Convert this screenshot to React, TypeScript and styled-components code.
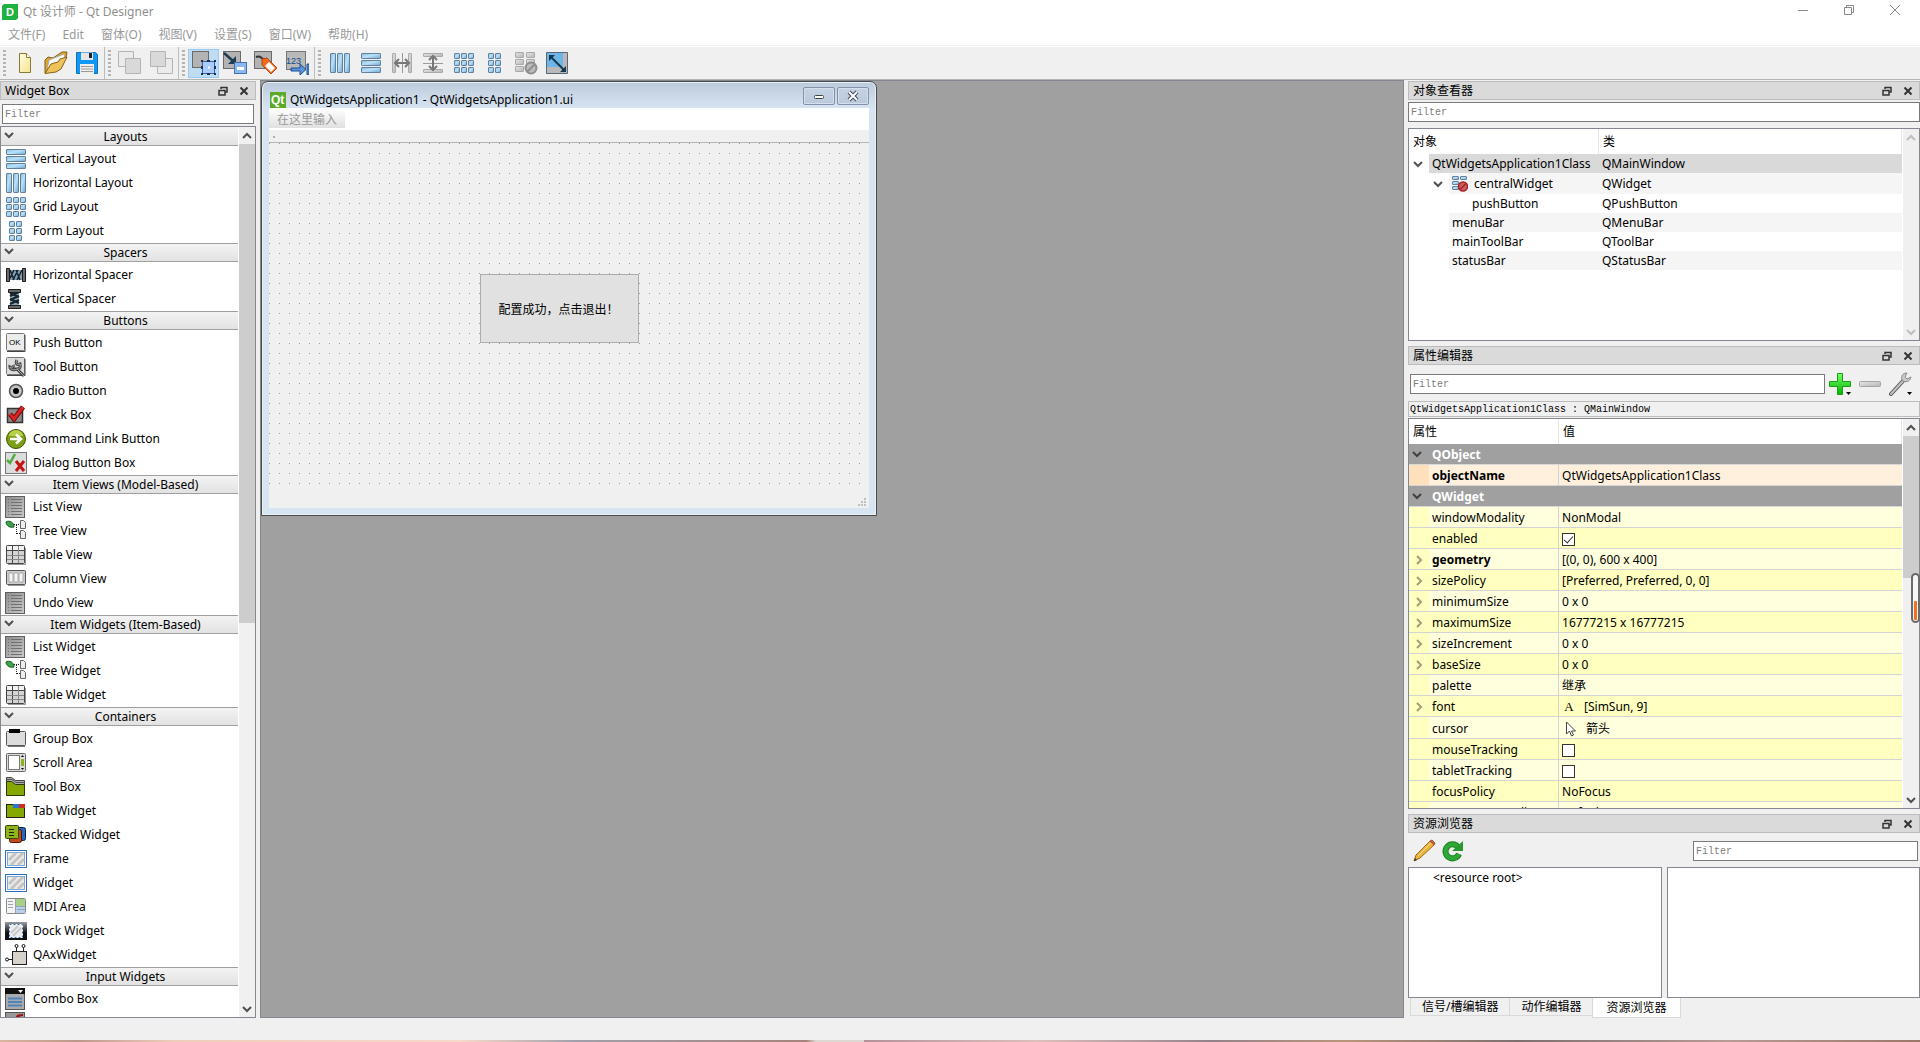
import React from "react";
import styled, { createGlobalStyle, css } from "styled-components";

const UI = `"Noto Sans", "Noto Sans CJK SC", sans-serif`;
const MONO = `"Liberation Mono", "Noto Sans CJK SC", monospace`;

const Global = createGlobalStyle`
  *, *::before, *::after { box-sizing: border-box; }
  body { margin: 0; font: 12px/16px ${UI}; color: #000; background: #f0f0f0; }
  button, input { font: inherit; color: inherit; margin: 0; }
  button { padding: 0; border: 0; background: none; }
  svg { display: block; flex: none; }
`;

/* ---------- frame of the application ---------- */

const Shell = styled.div`
  height: 100vh;
  min-height: 720px;
  display: flex;
  flex-direction: column;
  overflow: hidden;
`;

const TitleBar = styled.header`
  display: flex;
  align-items: center;
  height: 24px;
  padding: 0 2px;
  background: #fff;
  color: #8f8f8f;
`;

const Caption = styled.span`
  flex: 1;
  padding-left: 5px;
`;

const CaptionButton = styled.button`
  display: grid;
  place-items: center;
  width: 46px;
  height: 20px;
  margin-bottom: 4px;
`;

const MenuBar = styled.nav`
  display: flex;
  gap: 1px;
  height: 22px;
  background: #fff;
  border-bottom: 1px solid #f0f0f0;
  color: #999;
`;

const MenuItem = styled.button`
  padding: 0 8px;
`;

const ToolBar = styled.div`
  display: flex;
  height: 34px;
  background: #f0f0f0;
  border-top: 1px solid #fff;
  border-bottom: 1px solid #b4b4b4;
`;

const ToolGroup = styled.div`
  display: flex;
  align-items: center;
  padding-right: 2px;
  & + & { border-left: 1px solid #bdbdbd; }
`;

const Grip = styled.span`
  width: 3px;
  height: 27px;
  margin: 0 3px;
  background: repeating-linear-gradient(#b4b4b4 0 2px, transparent 2px 4px);
`;

const ToolButton = styled.button<{ $on?: boolean }>`
  display: grid;
  place-items: center;
  width: 31px;
  height: 29px;
  ${(p) => p.$on && css`background: #c0dcf3; border: 1px solid #98ccf5;`}
`;

const Main = styled.main`
  flex: 1;
  min-height: 0;
  display: grid;
  grid-template-columns: 256px minmax(0, 1fr) 512px;
  column-gap: 4px;
`;

const StatusBar = styled.footer`
  height: 22px;
`;

const DesktopEdge = styled.div`
  height: 2px;
  background: linear-gradient(90deg, #d9b5a0, #bb9788 4%, #efcdbb 9%, #f7d9c8 24%, #a0a0ab 30%, #a5847c 42%,
    #ded8d2 42.5%, #ded8d2 45%, #b3939a 45%, #dcbfbb 54%, #93828a 63%, #b9957a 70%, #7c706f 79%, #b79b95 90%, #9b7767);
`;

/* ---------- docks ---------- */

const Dock = styled.section<{ $grow?: number }>`
  display: flex;
  flex-direction: column;
  min-height: 0;
  ${(p) => p.$grow && css`flex: ${p.$grow} 1 0;`}
`;

const DockColumn = styled.aside`
  display: flex;
  flex-direction: column;
  gap: 5px;
  min-height: 0;
  padding-top: 1px;
`;

const DockTitle = styled.h2`
  display: flex;
  align-items: center;
  gap: 5px;
  flex: none;
  height: 19px;
  margin: 0;
  padding: 0 3px 0 4px;
  font-size: 12px;
  font-weight: 400;
  line-height: 16px;
  background: #dadada;
  border: 1px solid #bcbcbc;
  & > span { flex: 1; padding-top: 1px; }
  & > button { display: grid; place-items: center; width: 16px; height: 16px; }
`;

const Filter = styled.input`
  min-width: 0;
  height: 20px;
  flex: none;
  padding: 1px 2px 0;
  border: 1px solid #7a7a7a;
  background: #fff;
  font: 10px/16px ${MONO};
  &::placeholder { color: #7d7d7d; opacity: 1; }
`;

const SideFilter = styled(Filter)<{ $wide?: boolean }>`
  margin: ${(p) => (p.$wide ? "2px 0 6px" : "4px 2px 2px")};
`;

const Frame = styled.div`
  display: flex;
  flex: 1;
  min-height: 0;
  background: #fff;
  border: 1px solid #828790;
`;

const Viewport = styled.div`
  flex: 1;
  min-width: 0;
  overflow: hidden;
`;

const Track = styled.div`
  display: flex;
  flex-direction: column;
  width: 16px;
  margin-left: 1px;
  background: #f0f0f0;
  color: #505050;
`;

const TrackButton = styled.button`
  display: grid;
  place-items: center;
  height: 17px;
  &:disabled { color: #bfbfbf; }
`;

const TrackArea = styled.div`
  flex: 1;
`;

const Thumb = styled.div`
  background: #cdcdcd;
`;

/* ---------- widget box ---------- */

const SectionHead = styled.button`
  display: grid;
  grid-template-columns: 24px 1fr 12px;
  align-items: center;
  width: 100%;
  height: 19px;
  margin-bottom: 1px;
  background: linear-gradient(#f3f3f3, #e2e2e2);
  border-top: 1px solid #a0a0a0;
  border-bottom: 1px solid #a0a0a0;
  & > svg { margin: 0 0 3px 3px; color: #505050; }
`;

const Section = styled.section`
  &:first-child ${SectionHead} { border-top-color: #f3f3f3; }
`;

const ItemList = styled.ul`
  list-style: none;
  margin: 0;
  padding: 0;
`;

const Item = styled.li`
  display: flex;
  align-items: center;
  gap: 6px;
  height: 24px;
  padding-left: 4px;
`;

/* ---------- workspace ---------- */

const Workspace = styled.div`
  position: relative;
  background: #a0a0a0;
  border: 1px solid #828790;
  overflow: hidden;
`;

const FormWindow = styled.article`
  position: absolute;
  left: 0;
  top: 0;
  padding: 0 7px 7px;
  background: #d7e4f2;
  background-image: linear-gradient(#bccbdb, #d7e4f2 26px);
  border: 1px solid #4a4a4a;
  border-radius: 7px 7px 0 0;
  box-shadow: inset 0 0 0 1px #e8f0f8;
`;

const FormTitle = styled.header`
  display: flex;
  align-items: center;
  gap: 2px;
  height: 26px;
  & > span { flex: 1; padding: 9px 0 0 2px; }
  & > svg { margin: 9px 0 0 1px; }
`;

const FormButton = styled.button`
  display: grid;
  place-items: center;
  width: 32px;
  height: 18px;
  margin-top: 1px;
  border: 1px solid #8491ab;
  border-radius: 2px;
  background: linear-gradient(#c5d3e3, #b9c9dc);
  box-shadow: inset 0 0 0 1px #d5e0ec;
`;

const FormBody = styled.div`
  width: 600px;
  background: #f0f0f0;
`;

const FormMenu = styled.div`
  height: 24px;
  background: #fff;
  border-bottom: 2px solid #f0f0f0;
`;

const TypeHere = styled.button`
  width: 76px;
  height: 20px;
  padding-top: 3px;
  color: #999;
  background: linear-gradient(#fff, #e0e0e0);
`;

const FormToolBar = styled.div`
  display: flex;
  align-items: center;
  height: 11px;
  padding-left: 4px;
  border-bottom: 1px solid #b4b4b4;
  &::before { content: ""; width: 2px; height: 2px; background: #b0b0b0; }
`;

const Canvas = styled.div`
  position: relative;
  height: 345px;
  background-image: linear-gradient(90deg, transparent 1px, #f0f0f0 1px), linear-gradient(#9a9a9a 1px, #f0f0f0 1px);
  background-size: 10px 10px;
`;

const PlacedButton = styled.button`
  position: absolute;
  left: 211px;
  top: 131px;
  width: 159px;
  height: 69px;
  padding: 2px 2px 0 0;
  background: #e1e1e1;
  border: 1px solid #adadad;
`;

const FormStatus = styled.div`
  display: flex;
  justify-content: flex-end;
  align-items: flex-end;
  height: 20px;
  padding: 2px 3px;
`;

/* ---------- object inspector ---------- */

const ObjectTable = styled.table`
  width: 100%;
  table-layout: fixed;
  border-collapse: separate;
  border-spacing: 0;
  th {
    height: 25px;
    padding: 0 4px;
    font-weight: 400;
    text-align: left;
    border-right: 1px solid #e5e5e5;
  }
  th:first-child { width: 190px; }
  td { padding: 0; white-space: nowrap; }
`;

const ObjectRow = styled.tr<{ $bg: string; $tall?: boolean }>`
  height: ${(p) => (p.$tall ? 21 : 19)}px;
  td:last-child { background: ${(p) => p.$bg}; padding-left: 3px; }
`;

const ObjectCell = styled.div<{ $depth: number; $bg: string; $tall?: boolean }>`
  display: flex;
  align-items: center;
  height: ${(p) => (p.$tall ? 21 : 19)}px;
  background: linear-gradient(90deg, #fff ${(p) => p.$depth * 20}px, ${(p) => p.$bg} 0);
`;

const Branch = styled.span<{ $depth: number }>`
  display: flex;
  justify-content: flex-end;
  width: ${(p) => p.$depth * 20}px;
  padding-right: 6px;
  margin-right: 3px;
  color: #505050;
`;

const ObjectName = styled.span<{ $icon?: boolean }>`
  padding-left: ${(p) => (p.$icon ? 6 : 0)}px;
`;

/* ---------- property editor ---------- */

const PropBar = styled.div`
  display: flex;
  align-items: center;
  margin: 9px 5px 7px 2px;
  height: 20px;
  flex: none;
  ${Filter} { flex: 1; }
`;

const PropButton = styled.button`
  display: grid;
  place-items: center;
  width: 30px;
  height: 28px;
`;

const ClassLabel = styled.div`
  flex: none;
  height: 16px;
  margin-bottom: 1px;
  padding: 1px 1px 0;
  border: 1px solid #bcbcbc;
  font: 10px/14px ${MONO};
`;

const PropTable = styled.table`
  width: 100%;
  table-layout: fixed;
  border-collapse: separate;
  border-spacing: 0;
  text-align: left;
  th { font-weight: 400; padding: 0 4px; }
  td, tbody th { height: 21px; padding: 2px 0 0; white-space: nowrap; }
  thead th { height: 25px; border-right: 1px solid #e5e5e5; }
`;

const GroupRow = styled.tr`
  th, td { background: #a0a0a0; color: #fff; border-bottom: 1px solid #d8d8d8; }
  tbody & th { font-weight: 700; padding-left: 3px; }
  tbody & td { padding-top: 0; }
  td > svg { margin-left: 3px; color: #404040; }
`;

const PropRow = styled.tr<{ $bg: string; $edge: string; $bold?: boolean; $tall?: boolean }>`
  height: ${(p) => (p.$tall ? 22 : 21)}px;
  td, th { background: ${(p) => p.$bg}; border-bottom: 1px solid #d4d4d4; }
  td:first-child { background: ${(p) => p.$edge}; color: #a09f78; }
  td > svg { margin-left: 5px; }
  tbody & th {
    padding-left: 3px;
    border-right: 1px solid #d4d4d4;
    font-weight: ${(p) => (p.$bold ? 700 : 400)};
  }
`;

const Value = styled.div`
  display: flex;
  align-items: center;
  gap: 8px;
  padding-left: 3px;
`;

const FontGlyph = styled.span`
  width: 14px;
  text-align: center;
  font: 13px/16px "Liberation Serif", serif;
`;

const Check = styled.input`
  appearance: none;
  width: 13px;
  height: 13px;
  display: grid;
  place-items: center;
  border: 1px solid #333;
  background: #fff;
  &:checked::after {
    content: "";
    width: 5px;
    height: 9px;
    margin-bottom: 3px;
    border: solid #333;
    border-width: 0 1px 1px 0;
    transform: rotate(42deg);
  }
`;

const Meter = styled.div`
  position: absolute;
  right: 0;
  top: 573px;
  width: 9px;
  height: 50px;
  padding: 26px 1px 0;
  border: 2px solid #6b6b6b;
  border-radius: 5px;
  background: #f6f6f6;
  &::after { content: ""; display: block; height: 19px; background: #f37021; border-radius: 1px; }
`;

/* ---------- resource browser ---------- */

const ResourceBar = styled.div`
  display: flex;
  align-items: center;
  gap: 5px;
  flex: none;
  height: 34px;
  padding: 2px 2px 0 4px;
  ${Filter} { width: 225px; margin-left: auto; }
`;

const ResourcePanes = styled.div`
  display: grid;
  grid-template-columns: 254px 1fr;
  gap: 5px;
  flex: 1;
  min-height: 0;
`;

const Root = styled.span`
  padding: 2px 0 0 24px;
`;

const Tabs = styled.div`
  display: flex;
  align-items: flex-start;
  flex: none;
  height: 20px;
  padding-left: 2px;
`;

const Tab = styled.button<{ $active?: boolean }>`
  height: ${(p) => (p.$active ? 20 : 18)}px;
  padding: 1px ${(p) => (p.$active ? 13 : 11)}px 0;
  border: 1px solid #d9d9d9;
  border-top: 0;
  background: ${(p) => (p.$active ? "#fff" : "#f0f0f0")};
  & + & { margin-left: -1px; }
`;

/* ---------- drawings ---------- */

const Svg = ({ s = 22, children }: { s?: number; children: React.ReactNode }) => (
  <svg width={s} height={s} viewBox={`0 0 ${s} ${s}`} fill="none" aria-hidden="true">{children}</svg>
);

const Chevron = ({ dir = "down" }: { dir?: "down" | "up" | "right" }) => {
  const d = { down: "M1 3 5 7 9 3", up: "M1 7 5 3 9 7", right: "M3 1 7 5 3 9" }[dir];
  return <Svg s={10}><path d={d} stroke="currentColor" strokeWidth="2" /></Svg>;
};

const Defs = () => (
  <defs>
    <linearGradient id="blue" x1="0" y1="0" x2="1" y2="1">
      <stop stopColor="#86bbdf" /><stop offset=".45" stopColor="#b9e2f8" /><stop offset="1" stopColor="#6ea6d2" />
    </linearGradient>
    <linearGradient id="grey" x1="0" y1="0" x2="1" y2="1">
      <stop stopColor="#e6e6e6" /><stop offset="1" stopColor="#b5b5b5" />
    </linearGradient>
    <linearGradient id="steel" x1="0" y1="0" x2="1" y2="1">
      <stop stopColor="#8c8c8c" /><stop offset="1" stopColor="#cbcbcb" />
    </linearGradient>
    <linearGradient id="gold" x1="0" y1="0" x2="1" y2="1">
      <stop stopColor="#fffce0" /><stop offset="1" stopColor="#f6e48c" />
    </linearGradient>
    <linearGradient id="green" x1="0" y1="0" x2="0" y2="1">
      <stop stopColor="#7bff6b" /><stop offset="1" stopColor="#00b400" />
    </linearGradient>
    <linearGradient id="dark" x1="0" y1="0" x2="0" y2="1">
      <stop stopColor="#9a9a9a" /><stop offset=".6" stopColor="#111" />
    </linearGradient>
  </defs>
);

type Cell = [number, number, number, number];
const Cells = ({ cells, dim }: { cells: Cell[]; dim?: boolean }) => (
  <>
    {cells.map(([x, y, w, h]) => (
      <rect key={`${x}-${y}`} x={x + 0.5} y={y + 0.5} width={w - 1} height={h - 1} rx=".5"
        fill={dim ? "url(#grey)" : "url(#blue)"} stroke={dim ? "#a9a9a9" : "#64809f"} />
    ))}
  </>
);

const rowsOf: Cell[] = [[1, 1, 20, 6], [1, 8, 20, 6], [1, 15, 20, 6]];
const colsOf: Cell[] = [[1, 1, 6, 20], [8, 1, 6, 20], [15, 1, 6, 20]];
const grid = (xs: number[]): Cell[] => xs.flatMap((x) => [1, 8, 15].map((y): Cell => [x, y, 6, 6]));

const Sheet = ({ w = 15 }: { w?: number }) => (
  <rect x=".5" y=".5" width={w} height={w} fill="#b3b3b3" stroke="#6a6a6a" />
);

const ListDrawing = () => (
  <Svg>
    <rect x=".5" y=".5" width="19" height="21" fill="url(#steel)" stroke="#5f5f5f" />
    {[3, 6, 9, 12, 15, 18].map((y) => <path key={y} d={`M3 ${y}.5h1M6 ${y}.5h11`} stroke="#707070" />)}
  </Svg>
);
const TreeDrawing = () => (
  <Svg>
    <path d="M1 2c3-2 8 0 8 5-4 1-8-1-8-5Z" fill="#3fa34c" stroke="#155a21" />
    <path d="M9 4.500h6M11.500 5v9M12 13.500h3" stroke="#222" strokeDasharray="1 1" />
    <path d="M15.500 .5h3l2 2v6h-5ZM15.500 10.500h3l2 2v6h-5Z" fill="#eee" stroke="#666" />
  </Svg>
);
const TableDrawing = () => (
  <Svg>
    <rect x="1.500" y="1.500" width="18" height="18" rx="1" fill="#d4d4d4" stroke="#444" />
    <path d="M2 2h17v4H2Z" fill="#f2f2f2" />
    <path d="M2 6.500h17M7.500 2v17" stroke="#444" /><path d="M2 11.500h17M2 15.500h17M13.500 2v17" stroke="#888" />
    <path d="M3 20.500h17.500V4" stroke="#999" />
  </Svg>
);
const HatchDrawing = () => (
  <Svg>
    <rect x=".5" y="2.500" width="21" height="17" fill="#fff" stroke="#2f6fc4" />
    <rect x="2.500" y="4.500" width="17" height="13" fill="#ececea" stroke="#7da5dc" />
    <path d="M4 12 11 5M6 17 18 5M13 17l6-6" stroke="#c4c4c4" strokeWidth="3" />
  </Svg>
);

const drawings: Record<string, React.ReactNode> = {
  rows: <Svg><Cells cells={rowsOf} /></Svg>,
  cols: <Svg><Cells cells={colsOf} /></Svg>,
  grid: <Svg><Cells cells={grid([1, 8, 15])} /></Svg>,
  form: <Svg><Cells cells={grid([4, 11])} /></Svg>,
  hspacer: (
    <Svg>
      <path d="M3 6h16v10H3Z" fill="#7f9fb3" />
      <path d="m4 16 5-10M8 16l5-10M12 16l5-10M5 6l4 10M11 6l4 10" stroke="#16242c" strokeWidth="1.500" />
      <path d="M1.500 4.500h3v13h-3ZM17.500 4.500h3v13h-3Z" fill="#6a6a6a" stroke="#1c1c1c" />
    </Svg>
  ),
  vspacer: (
    <Svg>
      <path d="M5 3h9v16H5Z" fill="#86a9bd" />
      <path d="m5 8 9-4M5 12l9-4M5 16l9-4M5 5l9 4M5 11l9 4" stroke="#16242c" strokeWidth="2" />
      <path d="M3.500 1.500h12v3h-12ZM3.500 17.500h12v3h-12Z" fill="#6a6a6a" stroke="#1c1c1c" />
    </Svg>
  ),
  push: (
    <Svg>
      <rect x="1.500" y="1.500" width="18" height="17" rx="1" fill="#ececec" stroke="#777" />
      <path d="M2 19.500h18V3" stroke="#444" />
      <text x="4" y="13" fontSize="8" fontFamily="Liberation Sans, sans-serif" fill="#000">OK</text>
    </Svg>
  ),
  tool: (
    <Svg>
      <rect x="1.500" y="1.500" width="18" height="17" rx="1" fill="#dcdcdc" stroke="#777" />
      <path d="M2 19.500h18V3" stroke="#444" />
      <path d="M12 4c-2 4 0 5 3 4 1 4-1 5-3 5l7 7M12 13c-3 2-7 0-7-2 2 1 4 0 3-2" stroke="#444" strokeWidth="3" />
      <path d="M12 4c-2 4 0 5 3 4 1 4-1 5-3 5l7 7M12 13c-3 2-7 0-7-2 2 1 4 0 3-2" stroke="#aaa" />
    </Svg>
  ),
  radio: (
    <Svg>
      <circle cx="11" cy="11" r="6.500" fill="#c4c4c4" stroke="#555" strokeWidth="1.500" />
      <circle cx="11" cy="11" r="3" fill="#000" />
    </Svg>
  ),
  check: (
    <Svg>
      <rect x="2.500" y="4.500" width="15" height="14" fill="#8b8b8b" stroke="#333" strokeWidth="1.500" />
      <path d="m5 10 4 5L18 3" stroke="#6e0a0a" strokeWidth="5" /><path d="m5 10 4 5L18 3" stroke="#d92222" strokeWidth="3" />
    </Svg>
  ),
  command: (
    <Svg>
      <circle cx="11" cy="11" r="9.500" fill="#7d9f15" stroke="#3f5207" />
      <path d="M4 8a7 6 0 0 1 14 0Z" fill="#b6d04c" />
      <path d="M5 11h10M11 6.500l5 4.500-5 4.500" stroke="#fff" strokeWidth="2.500" />
    </Svg>
  ),
  dialog: (
    <Svg>
      <rect x=".5" y=".5" width="21" height="21" fill="#dcdcdc" stroke="#777" />
      <path d="m2 8 3 3 5-9" stroke="#4dae3b" strokeWidth="2.500" />
      <path d="m11 9 8 10M19 9l-8 10" stroke="#c41414" strokeWidth="3" />
    </Svg>
  ),
  list: <ListDrawing />,
  tree: <TreeDrawing />,
  table: <TableDrawing />,
  column: (
    <Svg>
      <rect x="1.500" y="2.500" width="19" height="14" rx="1" fill="#ccc" stroke="#555" />
      <path d="M4 5h4v9H4ZM9 5h4v9H9ZM14 5h4v9h-4Z" fill="#f4f4f4" stroke="#aaa" />
      <path d="M3 17.500h17" stroke="#999" />
    </Svg>
  ),
  group: (
    <Svg>
      <rect x="1.500" y="3.500" width="19" height="14" rx="1" fill="#dcdcdc" stroke="#555" />
      <path d="M3 18.500h17" stroke="#777" /><path d="M4 1h11v4H4Z" fill="#000" />
    </Svg>
  ),
  scroll: (
    <Svg>
      <rect x="1.500" y="1.500" width="19" height="18" rx="1" fill="#ddd" stroke="#666" />
      <rect x="3.500" y="3.500" width="11" height="14" fill="#fff" stroke="#777" />
      <path d="M16 7h3v7h-3Z" fill="#8ab51a" /><path d="m16 5 1.500-2L19 5ZM16 16l1.500 2 1.500-2Z" fill="#000" />
    </Svg>
  ),
  toolbox: (
    <Svg>
      <path d="M1.500 1.500h5l4 3h9v15h-18Z" fill="#aaa" stroke="#444" />
      <path d="M1.500 5.500h5l4 3h9v11h-18Z" fill="#84a800" stroke="#2c3a00" />
      <path d="M2 3.500h5l4 3h8" stroke="#555" />
    </Svg>
  ),
  tab: (
    <Svg>
      <rect x="1.500" y="4.500" width="18" height="13" fill="#84a800" stroke="#222" />
      <path d="M8 4h6v4H8Z" fill="#2377d3" /><path d="M14 4h6v4h-6Z" fill="#d32b23" />
    </Svg>
  ),
  stacked: (
    <Svg>
      <rect x="8.500" y="3.500" width="12" height="13" rx="2" fill="#2566c4" stroke="#123" />
      <rect x="4.500" y="5.500" width="12" height="13" rx="2" fill="#c4491a" stroke="#4d1900" />
      <rect x=".5" y="1.500" width="13" height="13" rx="1" fill="#8fb31a" stroke="#39480a" />
      <path d="M4 5.500h5M4 8.500h5M4 11.500h5" stroke="#1d2600" />
    </Svg>
  ),
  hatch: <HatchDrawing />,
  mdi: (
    <Svg>
      <rect x="1.500" y="2.500" width="19" height="15" rx="1" fill="#f3f3f3" stroke="#888" />
      <path d="M11 3h9v7h-9Z" fill="#a5d086" /><path d="M11 10h9v7h-9Z" fill="#b6d2f3" />
      <path d="M3 5.500h5M3 8.500h5M3 11.500h5M12 13.500h8M11 10.500h9M10.500 3v14" stroke="#9aa3ad" />
    </Svg>
  ),
  dockw: (
    <Svg>
      <path d="M0 2h22v18H0Z" fill="url(#dark)" />
      <rect x="4.500" y="4.500" width="13" height="13" fill="#ececec" stroke="#fff" />
      <path d="m6 13 7-7M8 16l8-8" stroke="#c9c9c9" strokeWidth="2" />
      <rect x="4.500" y="4.500" width="13" height="13" stroke="#2f6fc4" strokeDasharray="2 2" />
    </Svg>
  ),
  qax: (
    <Svg>
      <rect x="7.500" y="7.500" width="14" height="13" fill="#d6d2cc" stroke="#222" />
      <path d="M11.500 7V3M18.500 7V3M7 15.500H3" stroke="#222" />
      <circle cx="11.500" cy="2" r="1.500" fill="#fff" stroke="#111" /><circle cx="18.500" cy="2" r="1.500" fill="#fff" stroke="#111" />
      <circle cx="2" cy="15.500" r="1.500" fill="#fff" stroke="#111" />
    </Svg>
  ),
  combo: (
    <Svg>
      <rect x=".5" y=".5" width="19" height="21" fill="#aaa" stroke="#555" />
      <path d="M0 0h20v6H0Z" fill="#111" /><path d="M13 2h5l-2.500 3Z" fill="#fff" />
      <path d="M3 10.500h14M3 14h14M3 17.500h14" stroke="#4f83bd" strokeWidth="2" />
    </Svg>
  ),
  fontcombo: (
    <Svg>
      <rect x=".5" y=".5" width="19" height="21" fill="#999" stroke="#555" />
      <path d="M11 7c1-4 3-4 7-4M14 3v6" stroke="#a01414" strokeWidth="2" />
    </Svg>
  ),
};

const toolGroups: { name: string; on?: boolean; art: React.ReactNode }[][] = [
  [
    { name: "New", art: <Svg s={24}><path d="M6.500 2.500h7l4 4v15h-11Z" fill="url(#gold)" stroke="#8a7a3a" /><path d="M13.500 2.500v4h4" fill="#fff" stroke="#8a7a3a" /></Svg> },
    { name: "Open", art: (
      <Svg s={24}>
        <path d="M1 22V9l3-3 5 1 9-6h5l-1 6Z" fill="#dca52c" stroke="#85611a" />
        <path d="m3 19 2-10 15-6 1 5-8 11Z" fill="#f7f7f2" stroke="#aaa" />
        <path d="M1 22.500 7 13l7-2 2-3 7-2-6 12-5 3Z" fill="#f0c35a" stroke="#85611a" />
      </Svg>
    ) },
    { name: "Save", art: (
      <Svg s={24}>
        <path d="M1.500 1.500h19l2 2v19h-21Z" fill="#1198f5" stroke="#0873c2" />
        <path d="M6 1.500h12V9H6Z" fill="#e5e5e5" /><path d="M14 2h3v5h-3Z" fill="#222" />
        <path d="M5 13h14v10H5Z" fill="#eee" /><path d="M6 15.500h12M6 18h12M6 20.500h12" stroke="#9a9a9a" />
      </Svg>
    ) },
  ],
  [
    { name: "Send to back", art: <Svg s={24}><g stroke="#b4b4b4"><path d="M.5.500h15v15H.5Z" fill="#ebebeb" /><path d="M7.500 7.500h15v15h-15Z" fill="#d9d9d9" /></g></Svg> },
    { name: "Bring to front", art: <Svg s={24}><g stroke="#b4b4b4"><path d="M8.500 7.500h15v15h-15Z" fill="#ebebeb" /><path d="M1.500.500h15v15h-15Z" fill="#d9d9d9" /></g></Svg> },
  ],
  [
    { name: "Edit widgets", on: true, art: (
      <Svg s={24}>
        <Sheet w={16} />
        <rect x="10.500" y="10.500" width="12" height="12" fill="#a9ccff" stroke="#3b64a8" />
        <path d="M9 9h2v2H9ZM15 9h3v2h-3ZM22 9h2v2h-2ZM9 15h2v3H9ZM22 15h2v3h-2ZM9 22h2v2H9ZM15 22h3v2h-3ZM22 22h2v2h-2Z" fill="#1d2f4f" />
        <path d="M16 15.500h2v2h-2Z" fill="#fff" />
      </Svg>
    ) },
    { name: "Edit signals/slots", art: (
      <Svg s={24}>
        <Sheet w={17} />
        <path d="m1 2 9 8" stroke="#1f3d52" strokeWidth="2.500" /><path d="M13 13V5l-8 8Z" fill="#1f3d52" />
        <rect x="11.500" y="11.500" width="12" height="11" fill="#8bb8ef" stroke="#4470ad" /><path d="M14 16h7v3h-7Z" fill="#fff" />
      </Svg>
    ) },
    { name: "Edit buddies", art: (
      <Svg s={24}>
        <Sheet w={17} />
        <path d="M2 6c5-2 5 2 8 2" stroke="#333" strokeWidth="2" />
        <path d="m8 8 5-1 10 10-6 6L8 14Z" fill="#ee6a1f" stroke="#b4470c" /><path d="m15 11 6 6-4 4-6-6Z" fill="#fff" />
      </Svg>
    ) },
    { name: "Edit tab order", art: (
      <Svg s={24}>
        <rect x="1.500" y=".5" width="19" height="18" fill="#b9b9b9" stroke="#777" />
        <text x="1" y="13" fontSize="9" fontFamily="Liberation Sans, sans-serif" fill="#0d4a8f">123</text>
        <path d="M6 17h9v-4l6 5.500-6 5.500v-4H6ZM22 13h2v11h-2Z" fill="#5b94da" stroke="#1d4e91" />
      </Svg>
    ) },
  ],
  [
    { name: "Lay out horizontally", art: drawings.cols },
    { name: "Lay out vertically", art: drawings.rows },
    { name: "Horizontal splitter", art: (
      <Svg><Cells dim cells={[[1, 1, 4, 20], [17, 1, 4, 20]]} /><path d="M11.500 1v20" stroke="#999" /><path d="M4 11h14M8 7l-4 4 4 4M14 7l4 4-4 4" stroke="#777" strokeWidth="2" /></Svg>
    ) },
    { name: "Vertical splitter", art: (
      <Svg><Cells dim cells={[[1, 1, 20, 4], [1, 17, 20, 4]]} /><path d="M1 11.500h20" stroke="#999" /><path d="M11 5v12M7 8l4-4 4 4M7 14l4 4 4-4" stroke="#777" strokeWidth="2" /></Svg>
    ) },
    { name: "Lay out in a grid", art: drawings.grid },
    { name: "Lay out in a form", art: drawings.form },
    { name: "Break layout", art: (
      <Svg s={24}>
        <Cells dim cells={[[1, 1, 9, 6], [12, 1, 9, 6], [1, 8, 9, 6], [12, 8, 9, 6], [1, 15, 9, 6]]} />
        <circle cx="17" cy="17" r="5.500" fill="#bbb" stroke="#8f8f8f" strokeWidth="2" /><path d="m13 21 8-8" stroke="#8f8f8f" strokeWidth="2" />
      </Svg>
    ) },
    { name: "Adjust size", art: (
      <Svg s={24}>
        <path d="M1.500 1.500h21v21h-21Z" fill="#b9b9b9" stroke="#55697a" /><path d="M2 2h16v14H2Z" fill="#6fb5e8" />
        <path d="m6 6 13 13" stroke="#16384f" strokeWidth="2" /><path d="M4 4h6l-6 6ZM21 21h-6l6-6Z" fill="#16384f" />
      </Svg>
    ) },
  ],
];

const RestoreGlyph = ({ bold }: { bold?: boolean }) => (
  <Svg s={10}>
    <path d={bold ? "M3 3V1.500h6V6H7M1 4.500h6V9H1Z" : "M2.500 2V.500h7v7H8M.5 2.500h7v7h-7Z"}
      stroke={bold ? "#333" : "#888"} strokeWidth={bold ? 1.5 : 1} />
  </Svg>
);
const CrossGlyph = ({ bold }: { bold?: boolean }) => (
  <Svg s={10}>
    <path d={bold ? "m1.500 1.500 7 7M8.500 1.500l-7 7" : "m0 0 10 10M10 0 0 10"} stroke={bold ? "#333" : "#888"} strokeWidth={bold ? 2 : 1} />
  </Svg>
);

/* ---------- data ---------- */

const menus = ["文件(F)", "Edit", "窗体(O)", "视图(V)", "设置(S)", "窗口(W)", "帮助(H)"];

const sections: { title: string; items: [string, string][] }[] = [
  { title: "Layouts", items: [["rows", "Vertical Layout"], ["cols", "Horizontal Layout"], ["grid", "Grid Layout"], ["form", "Form Layout"]] },
  { title: "Spacers", items: [["hspacer", "Horizontal Spacer"], ["vspacer", "Vertical Spacer"]] },
  { title: "Buttons", items: [["push", "Push Button"], ["tool", "Tool Button"], ["radio", "Radio Button"], ["check", "Check Box"], ["command", "Command Link Button"], ["dialog", "Dialog Button Box"]] },
  { title: "Item Views (Model-Based)", items: [["list", "List View"], ["tree", "Tree View"], ["table", "Table View"], ["column", "Column View"], ["list", "Undo View"]] },
  { title: "Item Widgets (Item-Based)", items: [["list", "List Widget"], ["tree", "Tree Widget"], ["table", "Table Widget"]] },
  { title: "Containers", items: [["group", "Group Box"], ["scroll", "Scroll Area"], ["toolbox", "Tool Box"], ["tab", "Tab Widget"], ["stacked", "Stacked Widget"], ["hatch", "Frame"], ["hatch", "Widget"], ["mdi", "MDI Area"], ["dockw", "Dock Widget"], ["qax", "QAxWidget"]] },
  { title: "Input Widgets", items: [["combo", "Combo Box"], ["fontcombo", ""]] },
];

const objects: { name: string; cls: string; depth: number; open?: boolean; icon?: boolean; bg: string }[] = [
  { name: "QtWidgetsApplication1Class", cls: "QMainWindow", depth: 1, open: true, bg: "#d9d9d9" },
  { name: "centralWidget", cls: "QWidget", depth: 2, open: true, icon: true, bg: "#f5f5f5" },
  { name: "pushButton", cls: "QPushButton", depth: 3, bg: "#fff" },
  { name: "menuBar", cls: "QMenuBar", depth: 2, bg: "#f5f5f5" },
  { name: "mainToolBar", cls: "QToolBar", depth: 2, bg: "#fff" },
  { name: "statusBar", cls: "QStatusBar", depth: 2, bg: "#f5f5f5" },
];

type Prop = { name: string; value?: string; checked?: boolean; more?: boolean; bold?: boolean; art?: "font" | "cursor" };
const widgetProps: Prop[] = [
  { name: "windowModality", value: "NonModal" },
  { name: "enabled", checked: true },
  { name: "geometry", value: "[(0, 0), 600 x 400]", more: true, bold: true },
  { name: "sizePolicy", value: "[Preferred, Preferred, 0, 0]", more: true },
  { name: "minimumSize", value: "0 x 0", more: true },
  { name: "maximumSize", value: "16777215 x 16777215", more: true },
  { name: "sizeIncrement", value: "0 x 0", more: true },
  { name: "baseSize", value: "0 x 0", more: true },
  { name: "palette", value: "继承" },
  { name: "font", value: "[SimSun, 9]", more: true, art: "font" },
  { name: "cursor", value: "箭头", art: "cursor" },
  { name: "mouseTracking", checked: false },
  { name: "tabletTracking", checked: false },
  { name: "focusPolicy", value: "NoFocus" },
  { name: "contextMenuPolicy", value: "DefaultContextMenu" },
];

/* ---------- parts ---------- */

const Title = ({ text }: { text: string }) => (
  <DockTitle>
    <span>{text}</span>
    <button aria-label="Float"><RestoreGlyph bold /></button>
    <button aria-label="Close"><CrossGlyph bold /></button>
  </DockTitle>
);

const ScrollBar = ({ thumb }: { thumb?: number }) => (
  <Track>
    <TrackButton aria-label="Scroll up" disabled={!thumb}><Chevron dir="up" /></TrackButton>
    <TrackArea>{thumb && <Thumb style={{ height: `${thumb}%` }} />}</TrackArea>
    <TrackButton aria-label="Scroll down" disabled={!thumb}><Chevron /></TrackButton>
  </Track>
);

const PropertyLine = ({ prop, bg, edge }: { prop: Prop; bg: string; edge: string }) => (
  <PropRow $bg={bg} $edge={edge} $bold={prop.bold} $tall={prop.art === "cursor"}>
    <td>{prop.more && <Chevron dir="right" />}</td>
    <th scope="row">{prop.value ? prop.name : <label htmlFor={prop.name}>{prop.name}</label>}</th>
    <td>
      <Value>
        {prop.art === "font" && <FontGlyph>A</FontGlyph>}
        {prop.art === "cursor" && (
          <Svg s={16}><path d="M4.500 1v12l3-3 2 5 2-1-2-4h4Z" fill="#fff" stroke="#444" /></Svg>
        )}
        {prop.value ?? <Check id={prop.name} type="checkbox" defaultChecked={prop.checked} />}
      </Value>
    </td>
  </PropRow>
);

export default function App() {
  return (
    <Shell>
      <Global />
      <TitleBar>
        <svg width="16" height="16" viewBox="0 0 16 16" aria-hidden="true">
          <Defs />
          <path d="M2 0h14v14l-2 2H0V2Z" fill="#1fb141" />
          <text x="4" y="12" fontSize="11" fontWeight="700" fontFamily="Liberation Sans, sans-serif" fill="#fff">D</text>
        </svg>
        <Caption>Qt 设计师 - Qt Designer</Caption>
        <CaptionButton aria-label="Minimize"><Svg s={10}><path d="M0 5.500h10" stroke="#888" /></Svg></CaptionButton>
        <CaptionButton aria-label="Restore"><RestoreGlyph /></CaptionButton>
        <CaptionButton aria-label="Close"><CrossGlyph /></CaptionButton>
      </TitleBar>
      <MenuBar>{menus.map((m) => <MenuItem key={m}>{m}</MenuItem>)}</MenuBar>
      <ToolBar>
        {toolGroups.map((group) => (
          <ToolGroup key={group[0].name}>
            <Grip />
            {group.map((t) => <ToolButton key={t.name} aria-label={t.name} $on={t.on}>{t.art}</ToolButton>)}
          </ToolGroup>
        ))}
      </ToolBar>

      <Main>
        <DockColumn>
          <Dock $grow={1}>
            <Title text="Widget Box" />
            <SideFilter placeholder="Filter" aria-label="Filter widgets" />
            <Frame>
              <Viewport>
                {sections.map((s) => (
                  <Section key={s.title}>
                    <SectionHead><Chevron /><span>{s.title}</span></SectionHead>
                    <ItemList>
                      {s.items.map(([art, name]) => <Item key={name}>{drawings[art]}{name}</Item>)}
                    </ItemList>
                  </Section>
                ))}
              </Viewport>
              <ScrollBar thumb={56} />
            </Frame>
          </Dock>
        </DockColumn>

        <Workspace>
          <FormWindow>
            <FormTitle>
              <svg width="16" height="16" viewBox="0 0 16 16" aria-hidden="true">
                <path d="M0 0h16v16H0Z" fill="#5caa28" />
                <text x="1" y="12" fontSize="12" fontWeight="700" fontFamily="Liberation Sans Narrow, Liberation Sans, sans-serif" fill="#fff">Qt</text>
              </svg>
              <span>QtWidgetsApplication1 - QtWidgetsApplication1.ui</span>
              <FormButton aria-label="Minimize"><Svg s={12}><rect x="1.500" y="5.500" width="9" height="3" rx="1" fill="#fff" stroke="#444" /></Svg></FormButton>
              <FormButton aria-label="Close">
                <Svg s={12}><path d="m2 2 8 8M10 2l-8 8" stroke="#444b5a" strokeWidth="4" /><path d="m2 2 8 8M10 2l-8 8" stroke="#fff" strokeWidth="2" /></Svg>
              </FormButton>
            </FormTitle>
            <FormBody>
              <FormMenu><TypeHere>在这里输入</TypeHere></FormMenu>
              <FormToolBar />
              <Canvas><PlacedButton>配置成功，点击退出！</PlacedButton></Canvas>
              <FormStatus>
                <Svg s={8}><path d="M6 0h2v2H6ZM3 3h2v2H3ZM6 3h2v2H6ZM0 6h2v2H0ZM3 6h2v2H3ZM6 6h2v2H6Z" fill="#bfbfbf" /></Svg>
              </FormStatus>
            </FormBody>
          </FormWindow>
        </Workspace>

        <DockColumn>
          <Dock $grow={260}>
            <Title text="对象查看器" />
            <SideFilter $wide placeholder="Filter" aria-label="Filter objects" />
            <Frame>
              <Viewport>
                <ObjectTable>
                  <thead><tr><th scope="col">对象</th><th scope="col">类</th></tr></thead>
                  <tbody>
                    {objects.map((o) => (
                      <ObjectRow key={o.name} $bg={o.bg} $tall={o.icon}>
                        <td>
                          <ObjectCell $depth={o.depth} $bg={o.bg} $tall={o.icon}>
                            <Branch $depth={o.depth}>{o.open && <Chevron />}</Branch>
                            {o.icon && (
                              <Svg s={16}>
                                <Cells cells={[[0, 0, 7, 4], [8, 0, 7, 4], [0, 5, 7, 4], [0, 10, 7, 4]]} />
                                <circle cx="11" cy="10.500" r="4.500" fill="#c96060" stroke="#a52222" strokeWidth="1.500" /><path d="m8 13.500 6-6" stroke="#a52222" strokeWidth="1.500" />
                              </Svg>
                            )}
                            <ObjectName $icon={o.icon}>{o.name}</ObjectName>
                          </ObjectCell>
                        </td>
                        <td>{o.cls}</td>
                      </ObjectRow>
                    ))}
                  </tbody>
                </ObjectTable>
              </Viewport>
              <ScrollBar />
            </Frame>
          </Dock>

          <Dock $grow={463}>
            <Title text="属性编辑器" />
            <PropBar>
              <Filter placeholder="Filter" aria-label="Filter properties" />
              <PropButton aria-label="Add property">
                <Svg s={24}><path d="M9.500 1.500h5v8h8v5h-8v8h-5v-8h-8v-5h8Z" fill="url(#green)" stroke="#14a014" /><path d="M18 20h5l-2.500 3Z" fill="#000" /></Svg>
              </PropButton>
              <PropButton aria-label="Remove property">
                <Svg s={24}><rect x="1.500" y="9.500" width="21" height="5" rx="1" fill="url(#grey)" stroke="#a5a5a5" /></Svg>
              </PropButton>
              <PropButton aria-label="Configure">
                <Svg s={24}>
                  <path d="m3 22 12-13" stroke="#555" strokeWidth="4" strokeLinecap="round" />
                  <path d="m3 22 12-13" stroke="#c4c4c4" strokeWidth="2" strokeLinecap="round" />
                  <path d="M19 1c-5 0-6 4-5 7 3 3 8 2 9-3l-4 2-2-2Z" fill="#c9c9c9" stroke="#8a8a8a" />
                  <path d="M19 20h5l-2.500 3Z" fill="#000" />
                </Svg>
              </PropButton>
            </PropBar>
            <ClassLabel>QtWidgetsApplication1Class : QMainWindow</ClassLabel>
            <Frame>
              <Viewport>
                <PropTable>
                  <colgroup><col width="20" /><col width="130" /><col /></colgroup>
                  <thead><tr><th scope="col" colSpan={2}>属性</th><th scope="col">值</th></tr></thead>
                  <tbody>
                    <GroupRow><td><Chevron /></td><th colSpan={2}>QObject</th></GroupRow>
                    <PropertyLine prop={{ name: "objectName", value: "QtWidgetsApplication1Class", bold: true }} bg="#fff0de" edge="#ffe0bd" />
                    <GroupRow><td><Chevron /></td><th colSpan={2}>QWidget</th></GroupRow>
                    {widgetProps.map((p, i) => (
                      <PropertyLine key={p.name} prop={p} bg={i % 2 ? "#ffffbf" : "#ffffdd"} edge="#ffffbf" />
                    ))}
                  </tbody>
                </PropTable>
              </Viewport>
              <ScrollBar thumb={40} />
            </Frame>
          </Dock>

          <Dock $grow={204}>
            <Title text="资源浏览器" />
            <ResourceBar>
              <button aria-label="Edit resources">
                <Svg s={24}><path d="m2 22 2-6L18 2l4 4L8 19Z" fill="#f0b33c" stroke="#9a6a14" /><path d="m18 2 2-1 3 3-1 2Z" fill="#cf6a55" stroke="#a04a3a" /><path d="m2 22 1-3 2 2Z" fill="#333" /><path d="m6 17 13-13" stroke="#fbdc8c" /></Svg>
              </button>
              <button aria-label="Reload">
                <Svg s={24}><path d="M18 15a7 7 0 1 1-1-7" stroke="#1c7f22" strokeWidth="6" /><path d="M18 15a7 7 0 1 1-1-7" stroke="#2ea836" strokeWidth="4" /><path d="M22 2v10H11Z" fill="#279a2e" /></Svg>
              </button>
              <Filter placeholder="Filter" aria-label="Filter resources" />
            </ResourceBar>
            <ResourcePanes>
              <Frame><Root>&lt;resource root&gt;</Root></Frame>
              <Frame />
            </ResourcePanes>
            <Tabs>
              <Tab>信号/槽编辑器</Tab>
              <Tab>动作编辑器</Tab>
              <Tab $active>资源浏览器</Tab>
            </Tabs>
          </Dock>
        </DockColumn>
      </Main>
      <StatusBar />
      <DesktopEdge />
      <Meter />
    </Shell>
  );
}
